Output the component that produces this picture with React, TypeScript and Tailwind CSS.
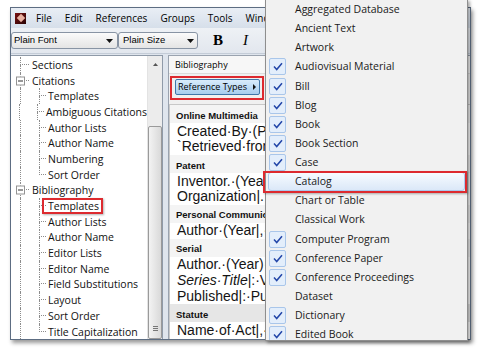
import React from "react";

const menuItems = [
  { label: "Aggregated Database", checked: false },
  { label: "Ancient Text", checked: false },
  { label: "Artwork", checked: false },
  { label: "Audiovisual Material", checked: true },
  { label: "Bill", checked: true },
  { label: "Blog", checked: true },
  { label: "Book", checked: true },
  { label: "Book Section", checked: true },
  { label: "Case", checked: true },
  { label: "Catalog", checked: false, hover: true },
  { label: "Chart or Table", checked: false },
  { label: "Classical Work", checked: false },
  { label: "Computer Program", checked: true },
  { label: "Conference Paper", checked: true },
  { label: "Conference Proceedings", checked: true },
  { label: "Dataset", checked: false },
  { label: "Dictionary", checked: true },
  { label: "Edited Book", checked: true },
];

function Check() {
  return (
    <svg width="10" height="9" viewBox="0 0 10 9">
      <path d="M1 4.6 L3.7 7.6 L9 1.2" fill="none" stroke="#2346a8" strokeWidth="1.5" />
    </svg>
  );
}

function Arrow() {
  return (
    <svg width="7" height="4" viewBox="0 0 7 4">
      <path d="M0 0 H7 L3.5 4 Z" fill="#111" />
    </svg>
  );
}

function Expander() {
  return (
    <div className="absolute left-[-4px] top-1/2 flex h-[9px] w-[9px] -translate-y-1/2 items-center justify-center border border-[#939393] bg-white">
      <div className="h-px w-[5px] bg-[#333]" />
    </div>
  );
}

function RootRow({ label, expander }: { label: string; expander?: boolean }) {
  return (
    <div className="flex h-[15.7px]">
      <div className="w-[9px]" />
      <div className="relative flex w-[9px] flex-col">
        <div className="h-1/2 border-b border-l border-dotted border-[#8c8c8c]" />
        <div className="h-1/2 border-l border-dotted border-[#8c8c8c]" />
        {expander && <Expander />}
      </div>
      <span className="ml-[3px] self-center whitespace-nowrap leading-[12px]">{label}</span>
    </div>
  );
}

function ChildRow({ label, last }: { label: string; last?: boolean }) {
  return (
    <div className="flex h-[15.7px]">
      <div className="w-[9px]" />
      <div className="w-[19px] border-l border-dotted border-[#8c8c8c]" />
      <div className="flex w-[7px] flex-col">
        <div className="h-1/2 border-b border-l border-dotted border-[#8c8c8c]" />
        <div className={last ? "h-1/2" : "h-1/2 border-l border-dotted border-[#8c8c8c]"} />
      </div>
      <span className="ml-[2px] self-center whitespace-nowrap leading-[12px]">{label}</span>
    </div>
  );
}

function Heading({ children, dark }: { children: React.ReactNode; dark?: boolean }) {
  return (
    <div className={dark ? "flex h-[18.4px] items-end bg-[#e6e6e6]" : "flex h-[18.4px] items-end bg-[#f4f4f4]"}>
      <div className="flex h-[15px] items-center pl-[6px] font-['Liberation_Sans',sans-serif] text-[9.5px] font-bold whitespace-nowrap text-[#111]">
        {children}
      </div>
    </div>
  );
}

function Line({ children }: { children: React.ReactNode }) {
  return (
    <div className="flex h-[15.7px] items-center pl-[7px] font-['Liberation_Sans',sans-serif] text-[14px] whitespace-nowrap text-[#141414]">
      {children}
    </div>
  );
}

export default function App() {
  return (
    <div className="relative h-[350px] w-[479px] overflow-hidden bg-white font-['Open_Sans',sans-serif] text-black">
      {/* window */}
      <div className="ml-[10px] mt-[7px] flex h-[333px] w-[461px] flex-col border border-[#5d6d82] bg-[#dfe5ed] shadow-[2px_3px_4px_rgba(0,0,0,0.4)]">
        {/* menu bar */}
        <div className="flex h-[20px] items-center gap-[13px] bg-linear-to-b from-[#e9eef5] to-[#d6dfea] pl-[4px] text-[10px]">
          <div className="mr-[-3px] flex h-[11px] w-[11px] items-center justify-center bg-linear-to-br from-[#7a1010] to-[#2a0505]">
            <div className="h-[6px] w-[6px] rotate-45 bg-[#e8b0a0]" />
          </div>
          <span>File</span>
          <span>Edit</span>
          <span>References</span>
          <span>Groups</span>
          <span>Tools</span>
          <span>Window</span>
        </div>

        {/* toolbar */}
        <div className="flex h-[26px] items-center border-b border-[#c4ccd7] bg-linear-to-b from-[#eef1f5] to-[#e2e7ee] font-['Liberation_Sans',sans-serif] text-[9.5px]">
          <div className="flex h-[17px] w-[107px] items-center justify-between rounded-[3px] border border-[#8894a4] bg-linear-to-b from-[#fbfbfb] to-[#e4e4e4] pl-[2px] pr-[4px]">
            <span>Plain Font</span>
            <Arrow />
          </div>
          <div className="flex h-[17px] w-[80px] items-center justify-between rounded-[3px] border border-[#8894a4] bg-linear-to-b from-[#fbfbfb] to-[#e4e4e4] pl-[4px] pr-[3px]">
            <span>Plain Size</span>
            <Arrow />
          </div>
          <span className="ml-[15px] font-['Liberation_Serif',serif] text-[15px] font-bold">B</span>
          <span className="ml-[20px] font-['Liberation_Serif',serif] text-[15px] italic">I</span>
        </div>

        {/* panes */}
        <div className="flex min-h-0 flex-1 pt-[1px]">
          {/* tree pane */}
          <div className="flex w-[152px] overflow-hidden border-t border-r border-[#8f9aa8] bg-white">
            <div className="flex-1 overflow-hidden pt-[1px] text-[10.5px] text-[#111]">
              <RootRow label="Sections" />
              <RootRow label="Citations" expander />
              <ChildRow label="Templates" />
              <ChildRow label="Ambiguous Citations" />
              <ChildRow label="Author Lists" />
              <ChildRow label="Author Name" />
              <ChildRow label="Numbering" />
              <ChildRow label="Sort Order" last />
              <RootRow label="Bibliography" expander />
              <ChildRow label="Templates" />
              <ChildRow label="Author Lists" />
              <ChildRow label="Author Name" />
              <ChildRow label="Editor Lists" />
              <ChildRow label="Editor Name" />
              <ChildRow label="Field Substitutions" />
              <ChildRow label="Layout" />
              <ChildRow label="Sort Order" />
              <ChildRow label="Title Capitalization" last />
            </div>
            {/* scrollbar */}
            <div className="flex w-[15px] flex-col border-l border-[#e3e3e3] bg-[#ececec]">
              <div className="flex h-[16px] items-center justify-center">
                <svg width="5" height="3" viewBox="0 0 5 3">
                  <path d="M0 3 L2.5 0 L5 3 Z" fill="#555" />
                </svg>
              </div>
              <div className="h-[54px]" />
              <div className="flex flex-1 flex-col items-center rounded-[2px] border border-[#9a9a9a] bg-linear-to-r from-[#f3f3f3] to-[#d9d9d9]">
                <div className="mt-[199px] flex flex-col gap-[1px]">
                  <div className="h-px w-[5px] bg-[#777]" />
                  <div className="h-px w-[5px] bg-[#777]" />
                  <div className="h-px w-[5px] bg-[#777]" />
                </div>
              </div>
            </div>
          </div>

          <div className="w-[5px]" />

          {/* style pane */}
          <div className="flex flex-1 flex-col overflow-hidden border-t border-l border-[#9aa3af] bg-[#f0f0f0]">
            <div className="flex h-[18px] items-center border-b border-[#dcdcdc] bg-[#f7f7f7] pl-[6px] text-[9px]">
              Bibliography
            </div>
            <div className="flex h-[30px] items-start pl-[6px] pt-[5px]">
              <div className="flex h-[16px] w-[85px] items-center justify-between rounded-[2px] border border-[#3f76a8] bg-linear-to-b from-[#d9ecfb] to-[#a6cdee] pl-[2px] pr-[3px] text-[9px]">
                <span>Reference Types</span>
                <svg width="3" height="6" viewBox="0 0 3 6">
                  <path d="M0 0 L3 3 L0 6 Z" fill="#111" />
                </svg>
              </div>
            </div>
            <div className="flex-1 overflow-hidden border-t border-l border-[#c8c8c8] bg-white">
              <Heading>Online Multimedia</Heading>
              <Line>Created·By·(Producer)|.·(Year)|.·Title|.·Type|.</Line>
              <Line>`Retrieved·from·URL|</Line>
              <Heading>Patent</Heading>
              <Line>Inventor.·(Year)|.·Title.·Patent·Number|.</Line>
              <Line>Organization|.</Line>
              <Heading>Personal Communication</Heading>
              <Line>Author·(Year|,·Date).·Personal·Communication</Line>
              <Heading>Serial</Heading>
              <Line>Author.·(Year)·Title|.</Line>
              <Line><i>Series·Title</i>|:·Volume·Issue|.·Place·Published</Line>
              <Line>Published|:·Publisher|.</Line>
              <Heading dark>Statute</Heading>
              <Line>Name·of·Act|,·Code·Number·(Year).·</Line>
            </div>
          </div>
        </div>
      </div>

      {/* reference type menu */}
      <div className="absolute left-[265px] top-[-1px] h-[342px] w-[203px] overflow-hidden border border-[#8e8e8e] bg-[#f1f1f1] text-[10.5px] leading-[13px] text-[#1a1a1a] shadow-[2px_2px_3px_rgba(0,0,0,0.35)]">
        {menuItems.map((item) => (
          <div
            key={item.label}
            className={
              item.hover
                ? "mx-[2px] flex h-[19.14px] items-center rounded-[3px] border border-[#aac8ec] bg-linear-to-b from-[#f7fbff] to-[#dbe8f8]"
                : "mx-[2px] flex h-[19.14px] items-center rounded-[3px] border border-transparent"
            }
          >
            {item.checked ? (
              <div className="flex h-[17px] w-[17px] items-center justify-center rounded-[2px] border border-[#a9c6ea] bg-[#e3eefb]">
                <Check />
              </div>
            ) : (
              <div className="h-[17px] w-[17px]" />
            )}
            <span className="ml-[9px] whitespace-nowrap">{item.label}</span>
          </div>
        ))}
      </div>

      {/* red annotation boxes */}
      <div className="absolute left-[170px] top-[76px] h-[24px] w-[94px] border-2 border-[#dd2a2f]" />
      <div className="absolute left-[42px] top-[198px] h-[16px] w-[61px] border-2 border-[#dd2a2f] shadow-[1px_1px_2px_rgba(0,0,0,0.3)]" />
      <div className="absolute left-[263px] top-[171px] h-[22px] w-[204px] border-2 border-[#dd2a2f] shadow-[1px_1px_2px_rgba(0,0,0,0.3)]" />
    </div>
  );
}
